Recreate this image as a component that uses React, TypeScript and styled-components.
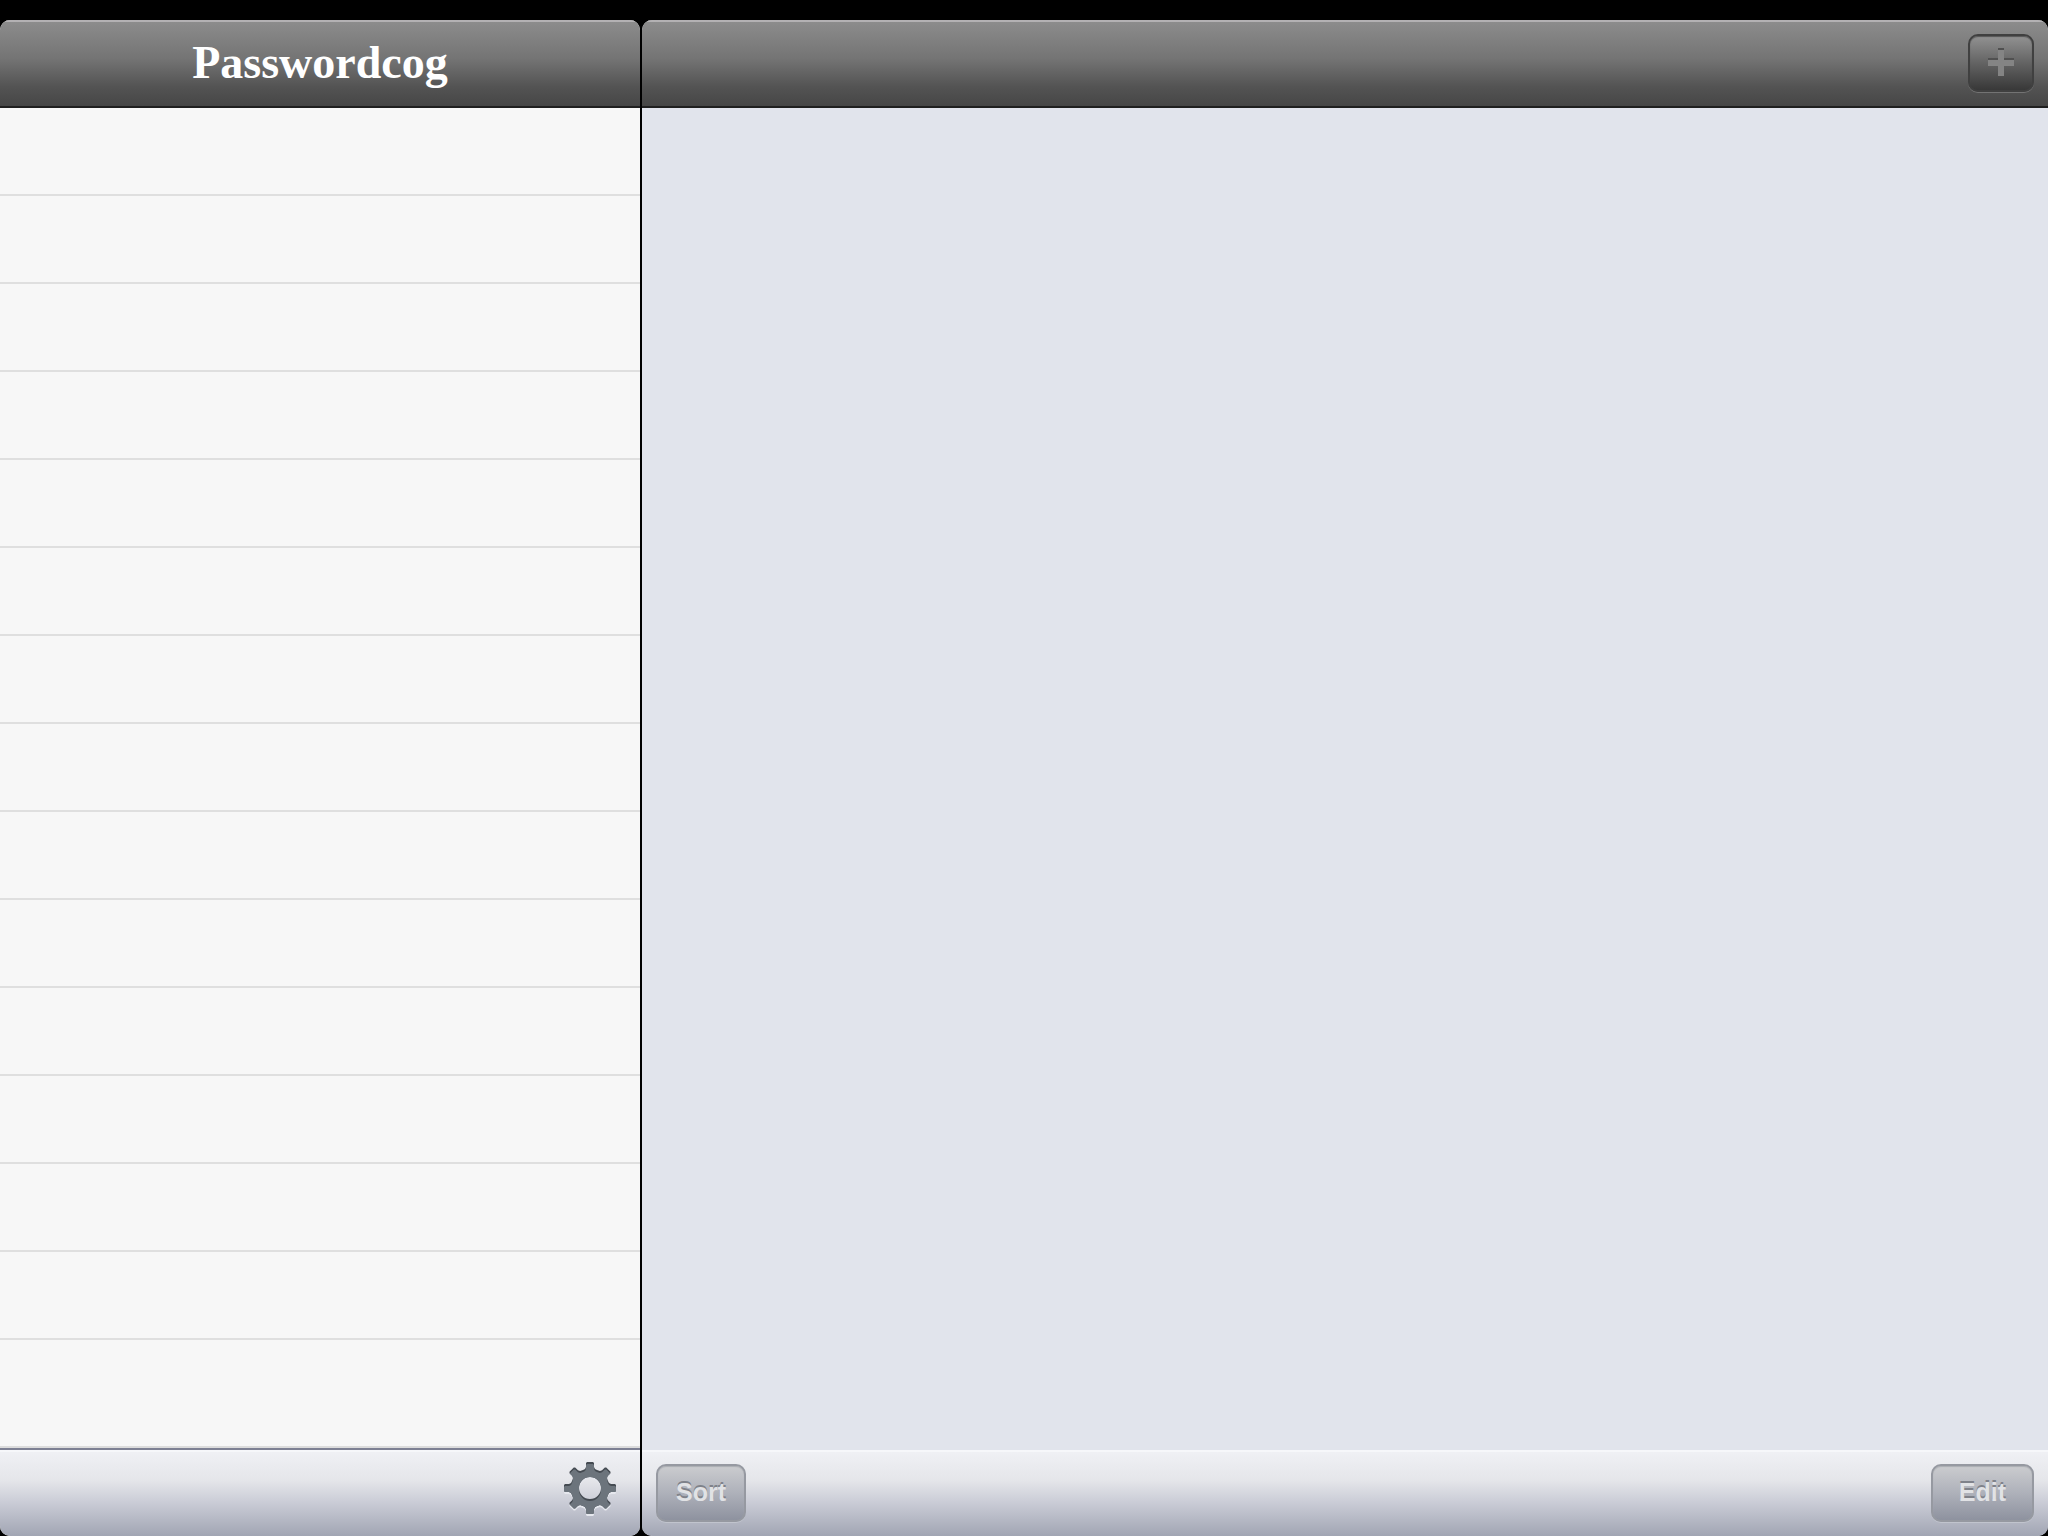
import React from "react";
import styled, { createGlobalStyle } from "styled-components";

const GlobalStyle = createGlobalStyle`
  *, *::before, *::after { box-sizing: border-box; }
  html, body { margin: 0; height: 100%; }
  #root { height: 100%; }
  body { background: #000; font-family: "Liberation Sans", Arial, Helvetica, sans-serif; }
`;

const Screen = styled.div`
  display: flex;
  flex-direction: column;
  height: 100vh;
  background: #000;
`;

const StatusBar = styled.div`
  flex: none;
  height: 20px;
`;

const SplitView = styled.main`
  flex: 1;
  min-height: 0;
  display: grid;
  grid-template-columns: 320fr 703fr;
  gap: 2px;
`;

const Pane = styled.section<{ $background: string }>`
  display: flex;
  flex-direction: column;
  min-width: 0;
  min-height: 0;
  overflow: hidden;
  border-radius: 10px;
  background: ${(p) => p.$background};
`;

const NavigationBar = styled.header<{ $align: string }>`
  flex: none;
  display: flex;
  align-items: center;
  justify-content: ${(p) => p.$align};
  height: 88px;
  padding: 0 14px;
  border-bottom: 2px solid #1f1f1f;
  background: linear-gradient(#8d8d8d, #747474 45%, #535353 78%, #464646);
  box-shadow: inset 0 2px 0 #b3b1b3;
`;

const Title = styled.h1`
  margin: 0;
  color: #fff;
  font: bold 46px/52px Optima, "Liberation Serif", serif;
`;

const AddButton = styled.button`
  display: grid;
  place-items: center;
  width: 66px;
  height: 58px;
  padding: 0 0 2px;
  border: 2px solid #404040;
  border-radius: 10px;
  background: linear-gradient(#929292, #656565 48%, #383838);
  box-shadow: 0 1px 0 #737373, inset 0 1px 1px #555;
`;

const RowList = styled.ul`
  flex: 1;
  min-height: 0;
  margin: 0;
  padding: 0;
  overflow: hidden;
  list-style: none;
  border-bottom: 2px solid #dcdcdc;
`;

const Row = styled.li`
  height: 88px;
  border-bottom: 2px solid #dfdfdf;
`;

const Detail = styled.div`
  flex: 1;
`;

const Toolbar = styled.footer<{ $align: string; $line: string; $side: string }>`
  flex: none;
  display: flex;
  align-items: center;
  justify-content: ${(p) => p.$align};
  height: 88px;
  padding: 0 ${(p) => p.$side};
  border-top: 2px solid ${(p) => p.$line};
  background: linear-gradient(#f0f1f5, #e5e6ea 35%, #cbcdd7 60%, #a1a5b3);
  box-shadow: inset 0 2px 0 #f6f7fa;
`;

const ToolbarButton = styled.button<{ $padding: string }>`
  height: 58px;
  padding: 0 ${(p) => p.$padding} 2px;
  border: 2px solid #9699a1;
  border-radius: 10px;
  background: linear-gradient(#cbcccf, #aeb1ba 50%, #8e929f);
  box-shadow: 0 1px 0 #c1c4cd, inset 0 1px 1px #aaadb2;
  color: #e1e2e5;
  font: bold 25px/28px "Liberation Sans", Arial, sans-serif;
  text-shadow: 0 -2px 0 #7f828a;
`;

const GearButton = styled.button`
  display: flex;
  padding: 0 0 8px;
  border: 0;
  background: none;
`;

function gearOutline() {
  const tooth = [
    [-7, -18],
    [-5, -19],
    [-4, -21],
    [-4, -25],
    [-3, -26],
    [3, -26],
    [4, -25],
    [4, -21],
    [5, -19],
    [7, -18],
  ];
  const points: string[] = [];
  for (let i = 0; i < 8; i++) {
    const a = (i * Math.PI) / 4;
    for (const [x, y] of tooth) {
      const px = x * Math.cos(a) - y * Math.sin(a);
      const py = x * Math.sin(a) + y * Math.cos(a);
      points.push(`${px.toFixed(2)} ${py.toFixed(2)}`);
    }
  }
  return `M${points.join("L")}Z M11 0A11 11 0 1 0 -11 0A11 11 0 1 0 11 0Z`;
}

const GEAR = gearOutline();

function GearIcon() {
  return (
    <svg width="52" height="56" viewBox="-26 -27 52 56" aria-hidden="true">
      <clipPath id="gear">
        <path d={GEAR} clipRule="evenodd" />
      </clipPath>
      <path d={GEAR} fillRule="evenodd" fill="#e6e8ee" transform="translate(0 2)" />
      <path d={GEAR} fillRule="evenodd" fill="#454b52" />
      <g clipPath="url(#gear)">
        <path d={GEAR} fillRule="evenodd" fill="#6c747c" transform="translate(0 2)" />
      </g>
    </svg>
  );
}

function PlusIcon() {
  return (
    <svg width="26" height="28" viewBox="0 0 26 28" aria-hidden="true">
      <path d="M10 0h6v10h10v6H16v10h-6V16H0v-6h10z" fill="#505050" />
      <path d="M10 2h6v10h10v6H16v10h-6V18H0v-6h10z" fill="#848484" />
    </svg>
  );
}

const rows = Array.from({ length: 14 }, (_, i) => i);

export default function App() {
  return (
    <Screen>
      <GlobalStyle />
      <StatusBar />
      <SplitView>
        <Pane $background="#f7f7f7">
          <NavigationBar $align="center">
            <Title>Passwordcog</Title>
          </NavigationBar>
          <RowList>
            {rows.map((row) => (
              <Row key={row} />
            ))}
          </RowList>
          <Toolbar $align="flex-end" $line="#7d8093" $side="24px">
            <GearButton type="button" aria-label="Settings">
              <GearIcon />
            </GearButton>
          </Toolbar>
        </Pane>
        <Pane $background="#e1e4ec">
          <NavigationBar $align="flex-end">
            <AddButton type="button" aria-label="Add">
              <PlusIcon />
            </AddButton>
          </NavigationBar>
          <Detail />
          <Toolbar $align="space-between" $line="#e1e4ec" $side="14px">
            <ToolbarButton type="button" $padding="18px">
              Sort
            </ToolbarButton>
            <ToolbarButton type="button" $padding="26px">
              Edit
            </ToolbarButton>
          </Toolbar>
        </Pane>
      </SplitView>
    </Screen>
  );
}
